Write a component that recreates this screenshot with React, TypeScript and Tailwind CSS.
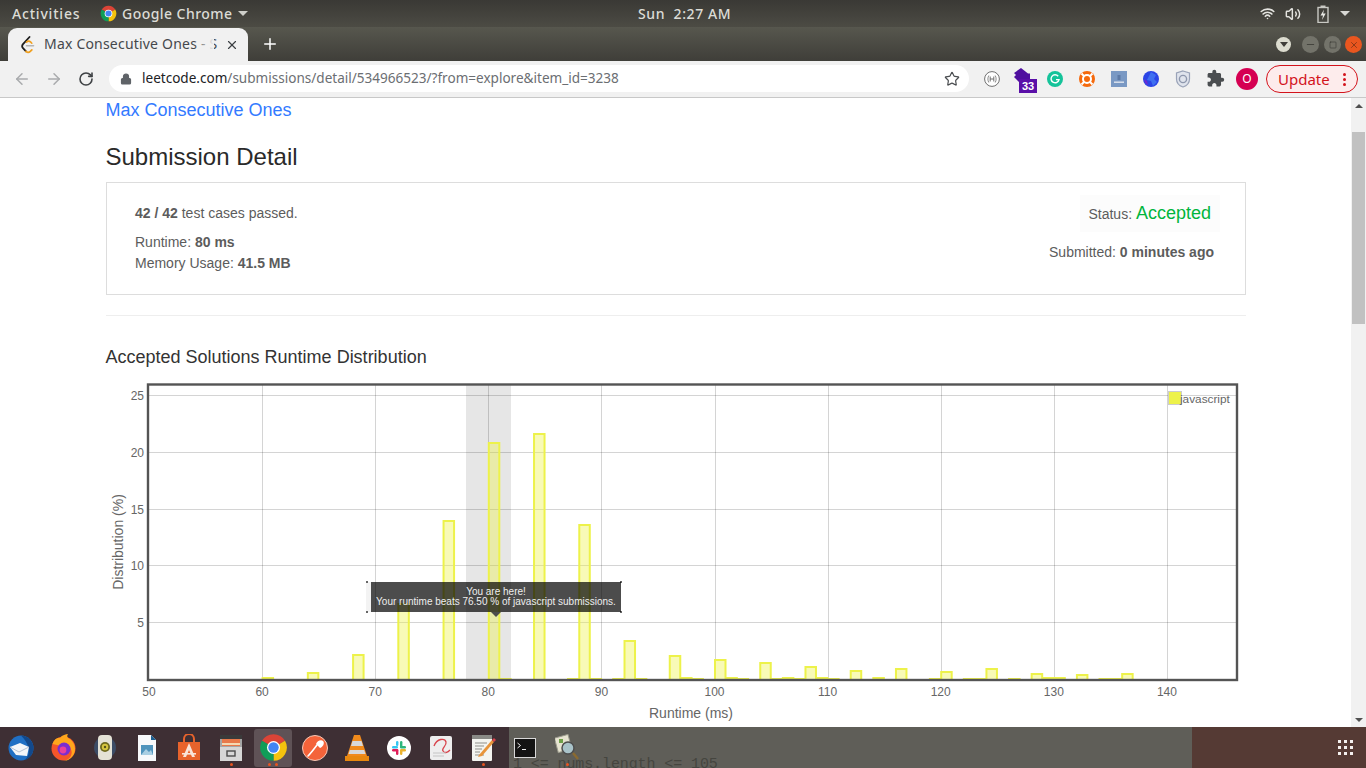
import React from 'react';
import { ArrowLeft, ArrowRight, RotateCw, Lock, Star, Plus, X, Wifi, Volume2, Minus, Square } from 'lucide-react';
import { MdExtension } from 'react-icons/md';

// [ms, y of the bar's outer top edge]
const barTops: [number, number][] = [
  [60, 677], [64, 672], [68, 654], [72, 603], [76, 520], [80, 442], [81, 678], [84, 433],
  [87, 678], [88, 524], [89, 678], [91, 678], [92, 640], [93, 678], [96, 655], [97, 677],
  [98, 678], [100, 659], [101, 677], [102, 678], [104, 662], [105, 678], [106, 677], [107, 678],
  [108, 666], [109, 677], [110, 678], [112, 670], [114, 677], [116, 668], [119, 678], [120, 671],
  [122, 678], [123, 678], [124, 668], [126, 678], [128, 673], [129, 677], [130, 677], [132, 674],
  [134, 678], [135, 678], [136, 673],
];
const xTicks = [50, 60, 70, 80, 90, 100, 110, 120, 130, 140];
const yTicks: [number, number][] = [[25, 395.5], [20, 452.5], [15, 509.5], [10, 565.5], [5, 622.5]];
const xPos = (ms: number) => 149 + (ms - 50) * 11.31;

const ChromeLogo = ({ size }: { size: number }) => (
  <svg width={size} height={size} viewBox="0 0 24 24">
    <path d="M2.47 6.5A11 11 0 0 1 21.53 6.5L12 12Z" fill="#db4437" />
    <path d="M21.53 6.5A11 11 0 0 1 12 23L12 12Z" fill="#f4c20d" />
    <path d="M12 23A11 11 0 0 1 2.47 6.5L12 12Z" fill="#0f9d58" />
    <circle cx="12" cy="12" r="5.4" fill="#fff" />
    <circle cx="12" cy="12" r="4.3" fill="#4285f4" />
  </svg>
);

const Chart = () => (
  <div className="relative mt-[9px] w-[1140px] h-[349px]">
    <svg width={1140} height={349} viewBox="106 378 1140 349" className="block">
      <rect x={466} y={385} width={45} height={295} fill="#e6e6e6" />
      {xTicks.slice(1).map((t) => (
        <line key={t} x1={Math.round(xPos(t)) + 0.5} x2={Math.round(xPos(t)) + 0.5} y1={385} y2={680} stroke="#000" strokeOpacity={0.17} />
      ))}
      {yTicks.map(([t, y]) => (
        <line key={t} x1={149} x2={1236} y1={y} y2={y} stroke="#000" strokeOpacity={0.17} />
      ))}
      {barTops.map(([ms, top]) => (
        <rect
          key={ms}
          x={xPos(ms) + 0.5}
          y={top + 1}
          width={10.5}
          height={680 - top - 1}
          fill="#edf24a"
          fillOpacity={0.4}
          stroke="#edf24a"
          strokeWidth={2}
        />
      ))}
      <rect x={148} y={384.5} width={1089} height={295.5} fill="none" stroke="#545454" strokeWidth={2.4} />
      {xTicks.map((t) => (
        <text key={t} x={xPos(t)} y={696} textAnchor="middle" className="text-[12px] fill-[#666666]">
          {t}
        </text>
      ))}
      {yTicks.map(([t, y]) => (
        <text key={t} x={144} y={y + 4.5} textAnchor="end" className="text-[12px] fill-[#666666]">
          {t}
        </text>
      ))}
      <text x={691} y={718} textAnchor="middle" className="text-[14px] fill-[#666666]">
        Runtime (ms)
      </text>
      <text
        x={0}
        y={0}
        transform="translate(123 542) rotate(-90)"
        textAnchor="middle"
        className="text-[14px] fill-[#666666]"
      >
        Distribution (%)
      </text>
      <rect x={1168.5} y={391.5} width={13} height={13} fill="#edf24a" stroke="#cccccc" />
      <text x={1180} y={403} className="text-[11.8px] fill-[#666666]">
        javascript
      </text>
    </svg>

    {/* tooltip */}
    <div className="absolute left-[260px] top-[204px] w-[5px] h-[30px] bg-[#f3f3f3]" />
    <div className="absolute left-[260px] top-[203px] w-[2px] h-[2px] bg-[#666666]" />
    <div className="absolute left-[260px] top-[233px] w-[2px] h-[2px] bg-[#666666]" />
    <div className="absolute left-[514px] top-[203px] w-[2px] h-[2px] bg-[#666666]" />
    <div className="absolute left-[514px] top-[233px] w-[2px] h-[2px] bg-[#666666]" />
    <div className="absolute left-[265px] top-[204px] w-[250px] h-[30px] bg-[#000000]/70 flex flex-col items-center justify-center text-[10px] leading-[10px] text-[#eeeeee]">
      <span>You are here!</span>
      <span>Your runtime beats 76.50 % of javascript submissions.</span>
      <div className="absolute left-[120px] top-[30px] w-0 h-0 border-x-[5px] border-x-transparent border-t-[5px] border-t-[#4d4d4d]" />
    </div>
  </div>
);

const TopBar = () => (
  <div className="relative h-[27px] shrink-0 flex items-center bg-gradient-to-b from-[#3a3935] to-[#4c4b44] text-[#dcdcd6] text-[14px] font-medium [font-family:'Noto_Sans',sans-serif]">
    <span className="ml-[12px] w-[88px] tracking-[0.8px]">Activities</span>
    <ChromeLogo size={17} />
    <span className="ml-[5px] tracking-[0.45px]">Google Chrome</span>
    <div className="ml-[6px] w-0 h-0 border-x-[5px] border-x-transparent border-t-[5px] border-t-[#cfcfca]" />
    <span className="absolute left-[638px] tracking-[0.6px]">Sun&nbsp;&nbsp;2:27 AM</span>
    <div className="ml-auto flex items-center gap-[12px] pr-[16px]">
      <Wifi size={15} strokeWidth={2.6} className="text-[#e4e4e0]" />
      <Volume2 size={16} strokeWidth={2.2} className="-ml-[2px] text-[#e4e4e0]" />
      <svg width="12" height="18" viewBox="0 0 12 18" className="ml-[4px]">
        <rect x="3.5" y="0.5" width="5" height="2" fill="#c9c9c4" />
        <rect x="1" y="2.5" width="10" height="15" fill="none" stroke="#c9c9c4" strokeWidth="1.4" />
        <path d="M7 4.5 3.5 10.5H6L5 15 8.7 8.5H6.2Z" fill="#e8e8e4" />
      </svg>
      <div className="-ml-[1px] w-0 h-0 border-x-[5px] border-x-transparent border-t-[5px] border-t-[#d8d8d4]" />
    </div>
  </div>
);

const TabBar = () => (
  <div className="h-[34px] shrink-0 flex items-end bg-gradient-to-b from-[#57574e] to-[#3f3e39] relative">
    <div className="ml-[8px] w-[240px] h-[33px] bg-[#f1f1f1] rounded-t-[9px] flex items-center relative">
      <svg width="16" height="18" viewBox="0 0 16 18" className="ml-[12px] shrink-0">
        <path d="M9.5 1 3 8.2c-1.2 1.4-1.2 2.6 0 3.9l3 3.2" fill="none" stroke="#1f1f1f" strokeWidth="1.8" strokeLinecap="round" />
        <path d="M6 15.3c1.3 1.3 3 1.3 4.3.1l1.5-1.5" fill="none" stroke="#f0a020" strokeWidth="1.8" strokeLinecap="round" />
        <path d="M6.5 6.2c1.3-1.2 3-1.2 4.3 0l1 1" fill="none" stroke="#f0a020" strokeWidth="1.6" strokeLinecap="round" />
        <path d="M6.5 9.8h7" stroke="#b3b3b3" strokeWidth="1.6" strokeLinecap="round" />
      </svg>
      <span className="ml-[8px] -mt-[2px] w-[176px] overflow-hidden whitespace-nowrap text-[14px] tracking-[0.2px] text-[#45484c] [font-family:'Noto_Sans',sans-serif]">
        Max Consecutive Ones - S
      </span>
      <div className="absolute right-[34px] top-0 w-[20px] h-full bg-gradient-to-r from-transparent to-[#f1f1f1]" />
      <X size={14} strokeWidth={2} className="absolute right-[9px] text-[#3c4043]" />
    </div>
    <Plus size={18} strokeWidth={2} className="ml-[13px] mb-[8px] text-white" />
    <div className="ml-auto mb-[8px] mr-[4px] flex items-center">
      <div className="w-[15px] h-[15px] rounded-full bg-[#dcdccf] flex items-center justify-center mr-[11px]">
        <div className="w-0 h-0 border-x-[4px] border-x-transparent border-t-[5px] border-t-[#3f3e39]" />
      </div>
      <div className="w-[17px] h-[17px] rounded-full bg-[#73736a] flex items-center justify-center mr-[5px]">
        <Minus size={11} strokeWidth={1.5} className="text-[#2f2f2a]" />
      </div>
      <div className="w-[17px] h-[17px] rounded-full bg-[#73736a] flex items-center justify-center mr-[4px]">
        <Square size={8} strokeWidth={1.5} className="text-[#2f2f2a]" />
      </div>
      <div className="w-[17px] h-[17px] rounded-full bg-[#e9561f] flex items-center justify-center">
        <X size={10} strokeWidth={1.5} className="text-[#5b2a14]" />
      </div>
    </div>
  </div>
);

const Toolbar = () => (
  <div className="h-[37px] shrink-0 flex items-center bg-[#f1f1f1] border-b border-[#c8c8c8] pb-[1px]">
    <ArrowLeft size={18} strokeWidth={2} className="ml-[13px] text-[#a9abad]" />
    <ArrowRight size={18} strokeWidth={2} className="ml-[14px] text-[#a9abad]" />
    <RotateCw size={16} strokeWidth={2.4} className="ml-[15px] text-[#3f4245]" />
    <div className="ml-[15px] w-[860px] h-[27px] rounded-full bg-white flex items-center">
      <Lock size={12} strokeWidth={2.4} className="ml-[11px] text-[#5f6368] fill-[#5f6368]" />
      <span className="ml-[10px] text-[13.55px] text-[#6b6e72] [font-family:'Noto_Sans',sans-serif] whitespace-nowrap">
        <span className="text-[#202124]">leetcode.com</span>/submissions/detail/534966523/?from=explore&amp;item_id=3238
      </span>
      <Star size={16} strokeWidth={1.8} className="ml-auto mr-[9px] text-[#4a4d50]" />
    </div>

    {/* extensions */}
    <div className="flex items-center">
      <div className="w-[38px] flex justify-end pr-[7px]">
        <svg width="16" height="16" viewBox="0 0 16 16">
          <circle cx="8" cy="8" r="7.4" fill="#fff" stroke="#6f6f6f" />
          <path d="M6.2 5.500v5M9.800 5.500v5M6.200 8h3.600" stroke="#6f6f6f" fill="none" />
          <path d="M4.800 4.500C3.600 6.500 3.600 9.500 4.800 11.500M11.200 4.500C12.400 6.500 12.400 9.500 11.200 11.500" stroke="#6f6f6f" fill="none" strokeWidth="0.8" />
        </svg>
      </div>
      <div className="relative w-[32px] h-[28px] flex items-center justify-center">
        <svg width="18" height="16" viewBox="0 0 18 16" className="-mt-[6px] -ml-[2px]">
          <path d="M8 0 15 5.5 17 5.5V11H13V14H6L1 9 3 7 1 5Z" fill="#4f0f9f" />
        </svg>
        <span className="absolute left-[12px] top-[14px] w-[18px] h-[14px] bg-[#5a0fa8] text-white text-[11px] leading-[14px] text-center font-bold [font-family:'Liberation_Sans',sans-serif]">
          33
        </span>
      </div>
      <div className="w-[32px] flex justify-center">
        <svg width="16" height="16" viewBox="0 0 16 16">
          <circle cx="8" cy="8" r="8" fill="#15c39a" />
          <path d="M11.2 5.3A4 4 0 1 0 12 8.6H9" fill="none" stroke="#fff" strokeWidth="1.4" />
        </svg>
      </div>
      <div className="w-[32px] flex justify-center">
        <svg width="16" height="16" viewBox="0 0 16 16">
          <circle cx="8" cy="8" r="8" fill="#f5690c" />
          <circle cx="8" cy="8" r="4" fill="none" stroke="#fff" strokeWidth="2" />
          <path d="M2.5 2.5 5.2 5.2M13.5 2.5 10.8 5.2M2.5 13.5 5.2 10.8M13.5 13.5 10.8 10.8" stroke="#fff" strokeWidth="2" />
        </svg>
      </div>
      <div className="w-[32px] flex justify-center">
        <svg width="16" height="16" viewBox="0 0 16 16">
          <rect width="16" height="16" fill="#7a99c4" />
          <rect x="6.5" y="4" width="3" height="5" fill="#5d7aa6" />
          <rect x="3" y="10.5" width="10" height="1.4" fill="#dfe6f0" />
        </svg>
      </div>
      <div className="w-[32px] flex justify-center">
        <svg width="16" height="16" viewBox="0 0 16 16">
          <circle cx="8" cy="8" r="8" fill="#2b45e6" />
          <path d="M8 1 13 4 11 8 14 11 10 15 8 10 4 9 6 5Z" fill="#3f6ff0" />
          <path d="M1 8 4 10 5 14 2 12Z" fill="#6a2bd0" />
        </svg>
      </div>
      <div className="w-[32px] flex justify-center">
        <svg width="16" height="18" viewBox="0 0 16 18">
          <path d="M8 1 14.5 3V9C14.5 13 11.5 15.8 8 17 4.5 15.8 1.5 13 1.5 9V3Z" fill="#dfe3ec" stroke="#9aa3b8" strokeWidth="1.2" />
          <circle cx="8" cy="9" r="3.6" fill="none" stroke="#8e97ad" strokeWidth="1.4" />
        </svg>
      </div>
      <div className="w-[32px] flex justify-center">
        <MdExtension size={19} className="text-[#4a4d50]" />
      </div>
      <div className="w-[32px] flex justify-center">
        <div className="w-[22px] h-[22px] rounded-full bg-[#d50052] flex items-center justify-center text-white text-[12px] [font-family:'Noto_Sans',sans-serif]">
          O
        </div>
      </div>
    </div>
    <div className="ml-[3px] w-[92px] h-[28px] rounded-full border border-[#d3131c] bg-[#fdecec] flex items-center pl-[11px] pt-[1px] text-[15px] text-[#d3131c] [font-family:'Noto_Sans',sans-serif]">
      Update
      <div className="ml-auto mr-[11px] flex flex-col gap-[2px]">
        <div className="w-[3px] h-[3px] rounded-full bg-[#d3131c]" />
        <div className="w-[3px] h-[3px] rounded-full bg-[#d3131c]" />
        <div className="w-[3px] h-[3px] rounded-full bg-[#d3131c]" />
      </div>
    </div>
  </div>
);

const Scrollbar = () => (
  <div className="w-[15px] shrink-0 bg-[#f1f1f1] flex flex-col items-center">
    <div className="mt-[6px] w-0 h-0 border-x-[4px] border-x-transparent border-b-[4px] border-b-[#505050]" />
    <div className="mt-[24px] w-[13px] h-[192px] bg-[#c1c1c1]" />
    <div className="mt-auto mb-[5px] w-0 h-0 border-x-[4px] border-x-transparent border-t-[4px] border-t-[#505050]" />
  </div>
);

const DockIcon = ({ children, dots = 0, active = false }: { children: React.ReactNode; dots?: number; active?: boolean }) => (
  <div className="relative w-[42px] h-[41px] shrink-0 flex items-center justify-center">
    {active && <div className="absolute left-[2px] top-[2px] w-[38px] h-[38px] rounded-[3px] bg-[#5f5256]" />}
    <div className="relative flex">{children}</div>
    {dots > 0 && (
      <div className="absolute bottom-[2px] inset-x-0 flex justify-center gap-[4px]">
        {Array.from({ length: dots }).map((_, i) => (
          <div key={i} className="w-[3px] h-[3px] rounded-full bg-[#e95420]" />
        ))}
      </div>
    )}
  </div>
);

const Dock = () => (
  <div className="h-[41px] shrink-0 flex">
    <div className="w-[509px] flex bg-[#3e2f34]">
      <DockIcon>
        <svg width="26" height="26" viewBox="0 0 26 26">
          <circle cx="13" cy="13" r="12.5" fill="#1f6fc4" />
          <path d="M13 .5A12.5 12.5 0 0 1 25.5 13c0 6-4 11-9 12 4-3 5-8 4-12-1-5-4-9-7.500-12.500Z" fill="#12498c" />
          <path d="M2 12 12 8l9 4-2 9-11-1Z" fill="#f4f6f9" />
          <path d="M2 12l9 5 10-5" fill="none" stroke="#b7c3d3" />
        </svg>
      </DockIcon>
      <DockIcon>
        <svg width="25" height="27" viewBox="0 0 25 27">
          <circle cx="12.500" cy="14.500" r="12" fill="#f5562a" />
          <path d="M1.500 10C3 5 7 3 9 4c2-3 6-4 8-4-1 1-1 3 0 4 4 2 7 6 7 11 0 6-5 12-11.500 12 6-1 9-6 8-10-1-5-6-7-10-5Z" fill="#ffa71c" />
          <circle cx="13" cy="15" r="6.500" fill="#7a2dd0" />
          <circle cx="12" cy="16" r="3.400" fill="#e8409c" />
        </svg>
      </DockIcon>
      <DockIcon>
        <svg width="22" height="27" viewBox="0 0 22 27">
          <circle cx="11" cy="13.500" r="11" fill="#3c4c66" />
          <rect x="4" y="1" width="14" height="25" rx="4" fill="#e4e2d6" />
          <circle cx="11" cy="13" r="5" fill="#6e6a20" />
          <circle cx="11" cy="13" r="3.200" fill="#d6c640" />
          <circle cx="11" cy="13" r="1.200" fill="#55511a" />
        </svg>
      </DockIcon>
      <DockIcon>
        <svg width="20" height="28" viewBox="0 0 20 28">
          <path d="M1 1H14L19 6V27H1Z" fill="#f7f9fb" />
          <path d="M14 1 19 6H14Z" fill="#1b5e90" />
          <rect x="4" y="11" width="12" height="10" fill="#4f94bd" />
          <path d="M4 21 9 15 12 18 14 16 16 21Z" fill="#a9cfe3" />
        </svg>
      </DockIcon>
      <DockIcon>
        <svg width="24" height="27" viewBox="0 0 24 27">
          <path d="M1 8H23V26H1Z" fill="#e8632c" />
          <path d="M7 8V5a5 5 0 0 1 10 0V8" fill="none" stroke="#e8632c" strokeWidth="2" />
          <path d="M12 9 6 23H9L12 16 15 23H18Z" fill="#f9e4d9" />
          <rect x="5" y="19" width="14" height="1.600" fill="#f9e4d9" />
        </svg>
      </DockIcon>
      <DockIcon dots={1}>
        <svg width="24" height="28" viewBox="0 0 24 28">
          <rect x="1" y="1" width="22" height="26" rx="2" fill="#a6a6a6" />
          <rect x="1" y="1" width="22" height="4" fill="#3a3a3a" />
          <rect x="3" y="5" width="18" height="7" fill="#e8794a" />
          <rect x="3" y="9" width="18" height="2" fill="#f4d9b4" />
          <rect x="1" y="13" width="22" height="14" fill="#d6d6d6" />
          <rect x="8" y="17" width="8" height="5" fill="none" stroke="#4a4a4a" strokeWidth="1.400" />
        </svg>
      </DockIcon>
      <DockIcon dots={2} active>
        <ChromeLogo size={29} />
      </DockIcon>
      <DockIcon>
        <svg width="26" height="26" viewBox="0 0 26 26">
          <circle cx="13" cy="13" r="12.500" fill="#f4633a" stroke="#f6c9b8" />
          <path d="M6 21C9 18 12 14 15 10" fill="none" stroke="#fff" strokeWidth="1.600" strokeLinecap="round" />
          <path d="M14 9c1-3 5-5 7-3s0 6-3 7Z" fill="#fff" />
        </svg>
      </DockIcon>
      <DockIcon>
        <svg width="26" height="28" viewBox="0 0 26 28">
          <path d="M10 1H16L23 22H3Z" fill="#f08a1c" />
          <path d="M8.500 7H17.500L19 12H7Z" fill="#d8d8d8" />
          <path d="M5.800 16H20.200L21.500 20H4.500Z" fill="#d8d8d8" />
          <path d="M1 22H25V27H1Z" fill="#e8880f" />
        </svg>
      </DockIcon>
      <DockIcon>
        <svg width="24" height="24" viewBox="0 0 24 24">
          <circle cx="12" cy="12" r="12" fill="#fff" />
          <rect x="5" y="10" width="6" height="2.400" rx="1.200" fill="#36c5f0" />
          <rect x="9" y="5" width="2.400" height="5" rx="1.200" fill="#36c5f0" />
          <rect x="13" y="5" width="2.400" height="7" rx="1.200" fill="#2eb67d" />
          <rect x="13" y="10" width="6" height="2.400" rx="1.200" fill="#2eb67d" />
          <rect x="13" y="13" width="6" height="2.400" rx="1.200" fill="#ecb22e" />
          <rect x="13" y="14" width="2.400" height="5" rx="1.200" fill="#ecb22e" />
          <rect x="9" y="13" width="2.400" height="6" rx="1.200" fill="#e01e5a" />
          <rect x="5" y="13" width="6" height="2.400" rx="1.200" fill="#e01e5a" />
        </svg>
      </DockIcon>
      <DockIcon>
        <svg width="26" height="26" viewBox="0 0 26 26">
          <rect x="2" y="1" width="22" height="24" rx="2" fill="#eeeeee" />
          <path d="M6 11C9 3 17 3 18 7s-5 6-3 9 5 1 7-1" fill="none" stroke="#d8434b" strokeWidth="1.300" />
          <path d="M5 18H18M5 21H16" stroke="#c4c4c4" />
        </svg>
      </DockIcon>
      <DockIcon dots={1}>
        <svg width="26" height="28" viewBox="0 0 26 28">
          <rect x="2" y="3" width="20" height="24" rx="1" fill="#f4f4f0" />
          <rect x="2" y="1" width="20" height="4" fill="#8a8a86" />
          <path d="M5 9H17M5 12H14M5 15H12M5 18H10M5 21H14" stroke="#8f8f8a" />
          <path d="M9 21 22 6l2 2L12 22 8 23Z" fill="#e8943a" />
          <path d="M22 6l2-2 2 2-2 2Z" fill="#d8434b" />
        </svg>
      </DockIcon>
      <div className="flex-1" />
    </div>

    <div className="relative flex-1 flex bg-[#5f5e58] overflow-hidden">
      <span className="absolute left-[4px] top-[29px] text-[15px] tracking-[-0.1px] leading-[18px] text-[#45453f] whitespace-pre [font-family:'Liberation_Mono',monospace]">
        1 &lt;= nums.length &lt;= 105
      </span>
      <div className="relative -ml-[5px] flex">
        <DockIcon>
          <svg width="22" height="20" viewBox="0 0 22 20">
            <rect x="0.500" y="0.500" width="21" height="19" fill="#141414" stroke="#d8d8d8" />
            <path d="M3.500 5 6.500 7.500 3.500 10" fill="none" stroke="#f0f0f0" />
            <path d="M8 11.500H12" stroke="#f0f0f0" />
          </svg>
        </DockIcon>
        <DockIcon dots={1}>
          <svg width="24" height="28" viewBox="0 0 24 28">
            <rect x="1" y="2" width="14" height="15" transform="rotate(-15 8 9)" fill="#e6e3d0" stroke="#9a9a8c" />
            <rect x="4" y="5" width="4" height="4" fill="#6fa04a" />
            <circle cx="13" cy="14" r="6" fill="#a9c3c9" stroke="#4d4d4d" strokeWidth="1.500" />
            <path d="M18 19 23 25" stroke="#8a6a30" strokeWidth="2.500" />
          </svg>
        </DockIcon>
      </div>
    </div>

    <div className="w-[174px] flex items-center justify-end pr-[13px] bg-[#553a34]">
      <div className="grid grid-cols-3 gap-[3px]">
        {Array.from({ length: 9 }).map((_, i) => (
          <div key={i} className="w-[3px] h-[3px] bg-[#f4f0ee]" />
        ))}
      </div>
    </div>
  </div>
);

export default function App() {
  return (
    <div className="w-[1366px] h-[768px] overflow-hidden flex flex-col bg-white [font-family:'Liberation_Sans',sans-serif]">
      <TopBar />
      <TabBar />
      <Toolbar />

      <div className="flex-1 min-h-0 flex">
        <main className="flex-1 pl-[106px] overflow-hidden">
          <div className="w-[1140px]">
            <a className="block -ml-[0.5px] h-[24px] leading-[24px] text-[18px] text-[#337aff]">Max Consecutive Ones</a>
            <h1 className="mt-[20px] -ml-[0.5px] text-[24px] leading-[30px] text-[#2a2a2a]">Submission Detail</h1>

            <div className="mt-[10px] h-[113px] border border-[#dddddd] flex justify-between text-[14px] text-[#5c5c5c]">
              <div className="pl-[28px] pt-[20px] leading-[20px]">
                <div>
                  <b>42 / 42</b> test cases passed.
                </div>
                <div className="mt-[9px] leading-[21px]">
                  Runtime: <b>80 ms</b>
                </div>
                <div className="leading-[21px]">
                  Memory Usage: <b>41.5 MB</b>
                </div>
              </div>
              <div className="pr-[31px] pt-[12px] flex flex-col items-end">
                <div className="-mr-[6px] h-[37px] leading-[37px] bg-[#fcfcfc] pl-[8px] pr-[9px]">
                  Status: <span className="text-[18px] text-[#00b53c]">Accepted</span>
                </div>
                <div className="mt-[10px] leading-[20px]">
                  Submitted: <b>0 minutes ago</b>
                </div>
              </div>
            </div>

            <hr className="mt-[20px] border-t border-[#eeeeee]" />
            <h3 className="mt-[29px] -ml-[0.5px] text-[18px] leading-[24px] text-[#333333]">Accepted Solutions Runtime Distribution</h3>
            <Chart />
          </div>
        </main>
        <Scrollbar />
      </div>

      <Dock />
    </div>
  );
}
